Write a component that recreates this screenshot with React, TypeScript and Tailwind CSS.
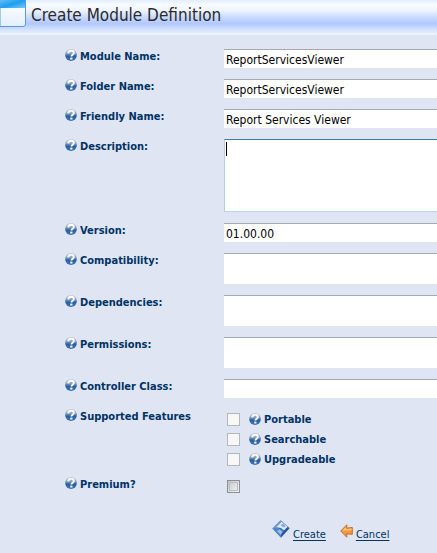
import type { ReactNode } from 'react';

type TextField = { id: string; label: string; value?: string; kind: 'line' | 'box' | 'tall' };

const fields: TextField[] = [
  { id: 'module-name', label: 'Module Name:', value: 'ReportServicesViewer', kind: 'line' },
  { id: 'folder-name', label: 'Folder Name:', value: 'ReportServicesViewer', kind: 'line' },
  { id: 'friendly-name', label: 'Friendly Name:', value: 'Report Services Viewer', kind: 'line' },
  { id: 'description', label: 'Description:', kind: 'tall' },
  { id: 'version', label: 'Version:', value: '01.00.00', kind: 'line' },
  { id: 'compatibility', label: 'Compatibility:', kind: 'box' },
  { id: 'dependencies', label: 'Dependencies:', kind: 'box' },
  { id: 'permissions', label: 'Permissions:', kind: 'box' },
  { id: 'controller-class', label: 'Controller Class:', kind: 'line' },
];

const features = ['Portable', 'Searchable', 'Upgradeable'];

function HelpIcon() {
  return (
    <svg className="h-3 w-3 shrink-0" viewBox="0 0 12 12" aria-hidden="true">
      <defs>
        <linearGradient id="help-ball" x1="0" y1="0" x2="0" y2="1">
          <stop offset="0" stopColor="#c3c9d2" />
          <stop offset="0.35" stopColor="#8ea6c4" />
          <stop offset="0.6" stopColor="#2a5f9f" />
          <stop offset="1" stopColor="#3f77b8" />
        </linearGradient>
      </defs>
      <circle cx="6" cy="6" r="5.9" fill="url(#help-ball)" />
      <path d="M3.2 4.3C3.4 2.5 4.6 1.8 6.1 1.8c1.6 0 2.7.8 2.7 2.1 0 1.9-2.4 1.8-2.4 3.7" fill="none" stroke="#fff" strokeWidth="1.9" />
      <rect x="5.3" y="8.6" width="2.1" height="1.9" fill="#fff" />
    </svg>
  );
}

function HelpButton({ topic }: { topic: string }) {
  return (
    <button type="button" aria-label={`Help: ${topic}`} className="flex h-3 w-3 shrink-0">
      <HelpIcon />
    </button>
  );
}

function Row({ id, label, children }: { id?: string; label: string; children: ReactNode }) {
  return (
    <div className="flex items-start">
      <div className="flex h-4 w-[159px] shrink-0 gap-[3px]">
        <HelpButton topic={label} />
        {id ? (
          <label htmlFor={id} className="font-bold leading-4">{label}</label>
        ) : (
          <span className="font-bold leading-4">{label}</span>
        )}
      </div>
      <div className="min-w-0 flex-1">{children}</div>
    </div>
  );
}

function Field({ field }: { field: TextField }) {
  if (field.kind === 'line') {
    return (
      <input
        id={field.id}
        type="text"
        defaultValue={field.value}
        className="block h-[19px] w-full border-t border-t-[#a4a9b2] bg-white px-0.5 pt-0.5 text-[12px] leading-4 text-black outline-none"
      />
    );
  }
  if (field.kind === 'tall') {
    return (
      <div className="relative">
        <textarea
          id={field.id}
          className="block h-[73px] w-full resize-none border-y border-l border-t-[#3d7bad] border-b-[#b7d9ed] border-l-[#b5cfe7] bg-white p-0.5 text-[12px] leading-4 text-black outline-none"
        />
        <span className="absolute left-[2px] top-[3px] h-3.5 w-px bg-black" />
      </div>
    );
  }
  return (
    <textarea
      id={field.id}
      className="block h-[31px] w-full resize-none border-t border-t-[#a4a9b2] bg-white p-0.5 text-[12px] leading-4 text-black outline-none"
    />
  );
}

export default function App() {
  return (
    <main className="min-h-screen bg-[#dfe5f2] font-['DejaVu_Sans_Condensed','DejaVu_Sans',sans-serif] text-[11px] text-[#003366]">
      <header className="flex h-[35px] items-start gap-[5px] bg-[linear-gradient(to_bottom,#e2edff_0%,#f8fcff_14%,#eef4ff_30%,#c8d9fd_50%,#b0c8fc_68%,#d3e1fe_84%,#eef5ff_100%)]">
        <svg className="h-[27px] w-[26px] shrink-0" viewBox="0 0 26 27" aria-hidden="true">
          <defs>
            <linearGradient id="win-bar" x1="0" y1="0" x2="1" y2="1">
              <stop offset="0" stopColor="#64bff5" />
              <stop offset="0.5" stopColor="#1e9eee" />
              <stop offset="1" stopColor="#7cc7f7" />
            </linearGradient>
            <linearGradient id="win-body" x1="0" y1="0" x2="0" y2="1">
              <stop offset="0" stopColor="#ffffff" />
              <stop offset="1" stopColor="#e2efff" />
            </linearGradient>
          </defs>
          <path d="M0 0H25.5V24Q25.5 26.5 23 26.5H0Z" fill="url(#win-body)" stroke="#5c9bdc" />
          <rect x="0" y="0" width="25" height="8" fill="url(#win-bar)" />
        </svg>
        <h1 className="text-[17px] leading-[30px] text-[#2b2b2b]">Create Module Definition</h1>
      </header>

      <form className="pl-[65px] pt-3.5" onSubmit={e => e.preventDefault()}>
        <div className="flex flex-col gap-[11px]">
          {fields.map(f => (
            <Row key={f.id} id={f.id} label={f.label}>
              <Field field={f} />
            </Row>
          ))}
          <Row label="Supported Features">
            <div className="flex h-[57px] flex-col pl-[3px]">
              {features.map(name => (
                <div key={name} className="flex h-5 shrink-0 items-center">
                  <input
                    id={name}
                    type="checkbox"
                    disabled
                    className="h-[13px] w-[13px] appearance-none border border-[#b5b8bb] bg-[#f7f7f7]"
                  />
                  <div className="flex items-center gap-[3px] pl-[9px]">
                    <HelpButton topic={name} />
                    <label htmlFor={name} className="pt-0.5 font-bold leading-4">{name}</label>
                  </div>
                </div>
              ))}
            </div>
          </Row>
          <Row id="premium" label="Premium?">
            <div className="pl-[3px] pt-[3px]">
              <input
                id="premium"
                type="checkbox"
                className="block h-[13px] w-[13px] appearance-none border border-[#8e8f8f] bg-linear-to-br from-[#c2c7ce] to-[#f6f6f6] outline-1 -outline-offset-3 outline-[#b9bdc4]"
              />
            </div>
          </Row>
        </div>

        <div className="flex items-end gap-3.5 pl-[207px] pt-[27px] text-[11px]">
          <a href="#create" className="flex items-start gap-[3px]">
            <svg className="h-[18px] w-[18px]" viewBox="0 0 18 18" aria-hidden="true">
              <path d="M8.5 .5L17.5 8 9 17.5 .5 8.5Z" fill="#3d72b4" stroke="#7396c0" strokeWidth=".6" />
              <path d="M.7 8.4L8.5 .7 11 2.8 3.4 11.2Z" fill="#6f9dd0" />
              <path d="M4.5 7L9.5 2 15.8 7 12 10.2 9 8Z" fill="#dfeaf6" />
              <path d="M8.5 5L11 3.8 13.8 6.2 11.5 7.5Z" fill="#7fabd9" />
              <path d="M1 8.8L4.5 7.5 12.5 11 9 17Z" fill="#4f86c6" />
              <path d="M5 11L7.5 9.5 10.5 12 8.8 14.8Z" fill="#9dc0e6" />
              <path d="M9 17.2L17.3 8.2 15.2 7.2 9 14.5Z" fill="#24569a" />
            </svg>
            <span className="pt-[7px] leading-4 underline underline-offset-2">Create</span>
          </a>
          <a href="#cancel" className="flex items-start gap-[3px]">
            <svg className="mt-1 h-[14px] w-[13px]" viewBox="0 0 13 14" aria-hidden="true">
              <path d="M.7 7L6.8 .8V4.2L12.3 3.4V10.3L6.8 9.8V13.2Z" fill="#f39a3c" stroke="#bd6420" strokeWidth=".9" />
              <path d="M2.5 6.6L6 3V5.2L11.5 4.5V6.2Z" fill="#ffc688" />
            </svg>
            <span className="pt-[7px] leading-4 underline underline-offset-2">Cancel</span>
          </a>
        </div>
      </form>
    </main>
  );
}
